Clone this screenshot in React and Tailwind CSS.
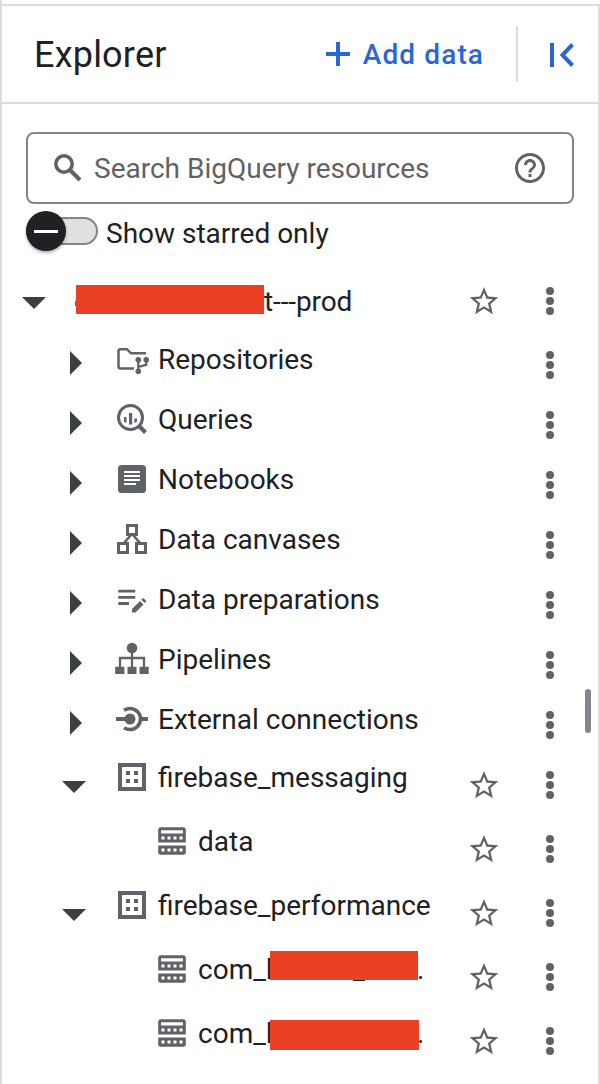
const grey = 'text-[#5f6368]';

function Svg({ w = 36, h = 36, className = '', children }) {
  return (
    <svg width={w} height={h} viewBox={`0 0 ${w} ${h}`} fill="currentColor" className={`block shrink-0 ${className}`}>
      {children}
    </svg>
  );
}

/* 36px icons, centred on 18,18 */
const icons = {
  repo: (
    <Svg className={grey}>
      <path d="M20 27.500H6.500Q4.500 27.500 4.500 25.500V10.200Q4.500 8.200 6.500 8.200H13L17 12.300H32" fill="none" stroke="currentColor" strokeWidth="2.500" />
      <circle cx="24.300" cy="18.800" r="2.800" />
      <circle cx="32.200" cy="18.800" r="2.800" />
      <circle cx="24.300" cy="30.200" r="2.800" />
      <path d="M24.300 18.800V30M32.200 18.800V23.800L24.300 25.800" fill="none" stroke="currentColor" strokeWidth="2.300" />
    </Svg>
  ),
  query: (
    <Svg className={grey}>
      <circle cx="16.500" cy="16.500" r="12" fill="none" stroke="currentColor" strokeWidth="3" />
      <path d="M24.500 24.500l7 7" stroke="currentColor" strokeWidth="4.200" />
      <path d="M10 16h2.500v6.200L10 20.500zM15 12h3.200v11.600H15zM20.300 17.500H23v3l-2.700 1.700z" />
    </Svg>
  ),
  notebook: (
    <Svg className={grey}>
      <rect x="4" y="4" width="28" height="28" rx="3.500" />
      <path d="M10 11h16M10 15h16M10 19h16M10 23h12" stroke="white" strokeWidth="2" />
    </Svg>
  ),
  canvas: (
    <Svg className={grey}>
      <g fill="none" stroke="currentColor" strokeWidth="3">
        <path d="M13.500 4.500h9v9h-9zM4.500 22.500h9v9h-9zM22.500 22.500h9v9h-9z" />
        <path d="M17 14l-7 8M19 14l7 8" strokeWidth="2.600" />
      </g>
    </Svg>
  ),
  prep: (
    <Svg className={grey}>
      <path d="M4.300 10.200h17M4.300 16.300h17M4.300 22.500h10.700" stroke="currentColor" strokeWidth="2.800" />
      <path d="M18 28L26 20l3.500 3.500-8 8H18zM27.300 18.700l1.200-1.200q.7-.7 1.400 0l1.900 1.900q.7.700 0 1.400l-1.200 1.200z" />
    </Svg>
  ),
  pipeline: (
    <Svg className={grey}>
      <circle cx="18" cy="7.100" r="5.300" />
      <path d="M18 8v18M6 26v-9h24V26" fill="none" stroke="currentColor" strokeWidth="2.300" />
      <path d="M1.200 25.700h9.200V33H1.200zM13.500 25.700h9V33h-9zM25.500 25.700h9.200V33h-9.200z" />
    </Svg>
  ),
  external: (
    <Svg className={grey}>
      <circle cx="16" cy="18" r="5.500" />
      <path d="M2 18h14M27 18h7" stroke="currentColor" strokeWidth="3.800" />
      <path d="M10 9.300Q12.800 7.500 16 7.500A10.500 10.500 0 0 1 16 28.500Q12.800 28.500 10 26.700" fill="none" stroke="currentColor" strokeWidth="3.600" />
    </Svg>
  ),
  dataset: (
    <Svg className={grey}>
      <path d="M6 6h24v24H6z" fill="none" stroke="currentColor" strokeWidth="4" />
      <path d="M12 12h4v4h-4zM20 12h4v4h-4zM12 20h4v4h-4zM20 20h4v4h-4z" />
    </Svg>
  ),
  table: (
    <Svg className={grey}>
      <path d="M7 4.300h22q2.800 0 2.800 2.800V19.500H4.200V7.100Q4.200 4.300 7 4.300z" />
      <path d="M4.200 22.500h27.600v6.700q0 2.500-2.500 2.500H6.700q-2.500 0-2.500-2.500z" />
      <path d="M7 7.300h22V10.500H7zM7.500 13.500h3v3h-3zM13.500 13.500h3v3h-3zM19.500 13.500h3v3h-3zM25.500 13.500h3v3h-3zM7.500 25.500h3v3h-3zM13.500 25.500h3v3h-3zM19.500 25.500h3v3h-3zM25.500 25.500h3v3h-3z" fill="white" />
    </Svg>
  ),
};

function Star() {
  return (
    <svg width="28" height="28" viewBox="2.200 2 19.600 19.600" fill="currentColor" className={`block shrink-0 overflow-visible ${grey}`}>
      <path d="M22 9.240l-7.190-.62L12 2 9.190 8.630 2 9.240l5.460 4.730L5.820 21 12 17.270 18.180 21l-1.630-7.030L22 9.240zM12 15.400l-3.760 2.270 1-4.280-3.320-2.880 4.380-.38L12 6.100l1.710 4.040 4.380.38-3.320 2.880 1 4.280L12 15.400z" />
    </svg>
  );
}

function Dots() {
  return (
    <Svg w={8} h={28} className={grey}>
      <circle cx="4" cy="4" r="4" />
      <circle cx="4" cy="14" r="4" />
      <circle cx="4" cy="24" r="4" />
    </Svg>
  );
}

function Down() {
  return (
    <Svg w={24} h={12} className="mt-7 text-[#3c4043]">
      <path d="M0 0h24L12 12z" />
    </Svg>
  );
}

function Right() {
  return (
    <Svg w={12} h={24} className="mt-[18px] text-[#3c4043]">
      <path d="M0 0l12 12L0 24z" />
    </Svg>
  );
}

function Actions({ star }) {
  return (
    <div className="ml-auto mr-[44px] flex shrink-0 gap-12 pt-[18px]">
      {star && <Star />}
      <Dots />
    </div>
  );
}

const label = 'whitespace-pre leading-8';

function Section({ icon, text }) {
  return (
    <div className="flex h-[60px] items-start pl-[68px]">
      <Right />
      <div className="ml-8 mt-2">{icons[icon]}</div>
      <span className={`${label} ml-2 mt-[11px]`}>{text}</span>
      <Actions />
    </div>
  );
}

function Dataset({ text }) {
  return (
    <div className="flex h-16 items-start pl-[60px]">
      <Down />
      <div className="ml-7 mt-1.5">{icons.dataset}</div>
      <span className={`${label} ml-2 mt-[9px]`}>{text}</span>
      <Actions star />
    </div>
  );
}

function Table({ children }) {
  return (
    <div className="flex h-16 items-start pl-[152px]">
      <div className="mt-1.5">{icons.table}</div>
      <div className={`${label} relative ml-2 mt-[9px] flex`}>{children}</div>
      <Actions star />
    </div>
  );
}

export default function App() {
  return (
    <div className="flex h-[1084px] w-[600px] flex-col overflow-hidden border-l-2 border-[#dadce0] bg-white pt-1 font-['Roboto',sans-serif] text-[28px] text-[#202124]">
      <div className="relative flex min-h-0 flex-1 flex-col border-r-2 border-t-2 border-[#dadce0]">
        <header className="flex h-[98px] shrink-0 items-center border-b-2 border-[#dadce0] pl-8 text-[#202124]">
          <h1 className="mt-0.5 text-[36px] leading-none tracking-[0.2px]">Explorer</h1>
          <button className="ml-auto flex items-center gap-[13px] font-medium text-[#2b66d9]">
            <Svg w={24} h={24} className="-mt-px">
              <path d="M10 0h4v10h10v4H14v10h-4V14H0v-4h10z" />
            </Svg>
            <span className="mt-0.5 text-[28px] leading-none tracking-[1.1px]">Add data</span>
          </button>
          <div className="ml-[32px] h-14 w-0.5 bg-[#dadce0]" />
          <Svg w={24} h={24} className="ml-8 mr-6 mt-0.5 text-[#2b66d9]">
            <path d="M0 0h4v24H0z" />
            <path d="M22.500 1.500L12.500 12l10 10.500" fill="none" stroke="currentColor" strokeWidth="4" />
          </Svg>
        </header>

        <div className="ml-6 mr-6 mt-7 flex h-[72px] shrink-0 items-center rounded-lg border-2 border-[#80868b] pl-[26px] pr-[27px] text-[#5f6368]">
          <Svg w={28} h={28}>
            <circle cx="10" cy="10" r="8.200" fill="none" stroke="currentColor" strokeWidth="3.600" />
            <path d="M15.500 15.500L26 26" stroke="currentColor" strokeWidth="4" />
          </Svg>
          <span className="ml-3 mt-0.5 whitespace-pre">Search BigQuery resources</span>
          <svg width="30" height="30" viewBox="2 2 20 20" fill="currentColor" className="ml-auto block">
            <path d="M11 18h2v-2h-2v2zm1-16C6.480 2 2 6.480 2 12s4.480 10 10 10 10-4.480 10-10S17.520 2 12 2zm0 18c-4.410 0-8-3.590-8-8s3.590-8 8-8 8 3.590 8 8-3.590 8-8 8zm0-14c-2.210 0-4 1.790-4 4h2c0-1.100.9-2 2-2s2 .9 2 2c0 2-3 1.750-3 5h2c0-2.250 3-2.500 3-5 0-2.210-1.790-4-4-4z" />
          </svg>
        </div>

        <div className="ml-6 mt-[7px] flex h-10 shrink-0 items-center">
          <div className="flex h-7 w-[72px] items-center rounded-full border-2 border-[#80868b] bg-[#e0e0e0]">
            <div className="-ml-0.5 flex h-10 w-10 shrink-0 items-center justify-center rounded-full bg-[#202124] shadow-[0_2px_3px_rgba(0,0,0,0.3)]">
              <div className="h-[3px] w-6 bg-white" />
            </div>
          </div>
          <span className="ml-2 mt-1.5 whitespace-pre">Show starred only</span>
        </div>

        <main className="mt-[18px] flex shrink-0 flex-col">
          <div className="flex h-16 items-start pl-5">
            <Down />
            <div className="relative ml-[30px] mt-4 h-[29px] w-[188px] bg-[#ea4026]">
              <div className="absolute -left-px top-4 h-[5px] w-px bg-[#5f6368]" />
            </div>
            <span className={`${label} mt-[17px] tracking-[-0.1px]`}>t---prod</span>
            <Actions star />
          </div>
          <Section icon="repo" text="Repositories" />
          <Section icon="query" text="Queries" />
          <Section icon="notebook" text="Notebooks" />
          <Section icon="canvas" text="Data canvases" />
          <Section icon="prep" text="Data preparations" />
          <Section icon="pipeline" text="Pipelines" />
          <Section icon="external" text="External connections" />
          <Dataset text="firebase_messaging" />
          <Table>data</Table>
          <Dataset text="firebase_performance" />
          <Table>
            <span className="w-[219px]">com_l</span>
            <span>.</span>
            <div className="absolute left-[72px] top-[-3px] h-[29px] w-[148px] bg-[#ea4026]" />
            <div className="absolute left-[155px] top-[26px] h-px w-3 bg-[#202124]" />
          </Table>
          <Table>
            <span className="w-[219px]">com_l</span>
            <span>.</span>
            <div className="absolute left-[72px] top-[2px] h-[30px] w-[149px] bg-[#ea4026]" />
          </Table>
        </main>

        <div className="absolute right-[7px] top-[683px] h-11 w-1.5 rounded-full bg-[#80868b]" />
      </div>
    </div>
  );
}
